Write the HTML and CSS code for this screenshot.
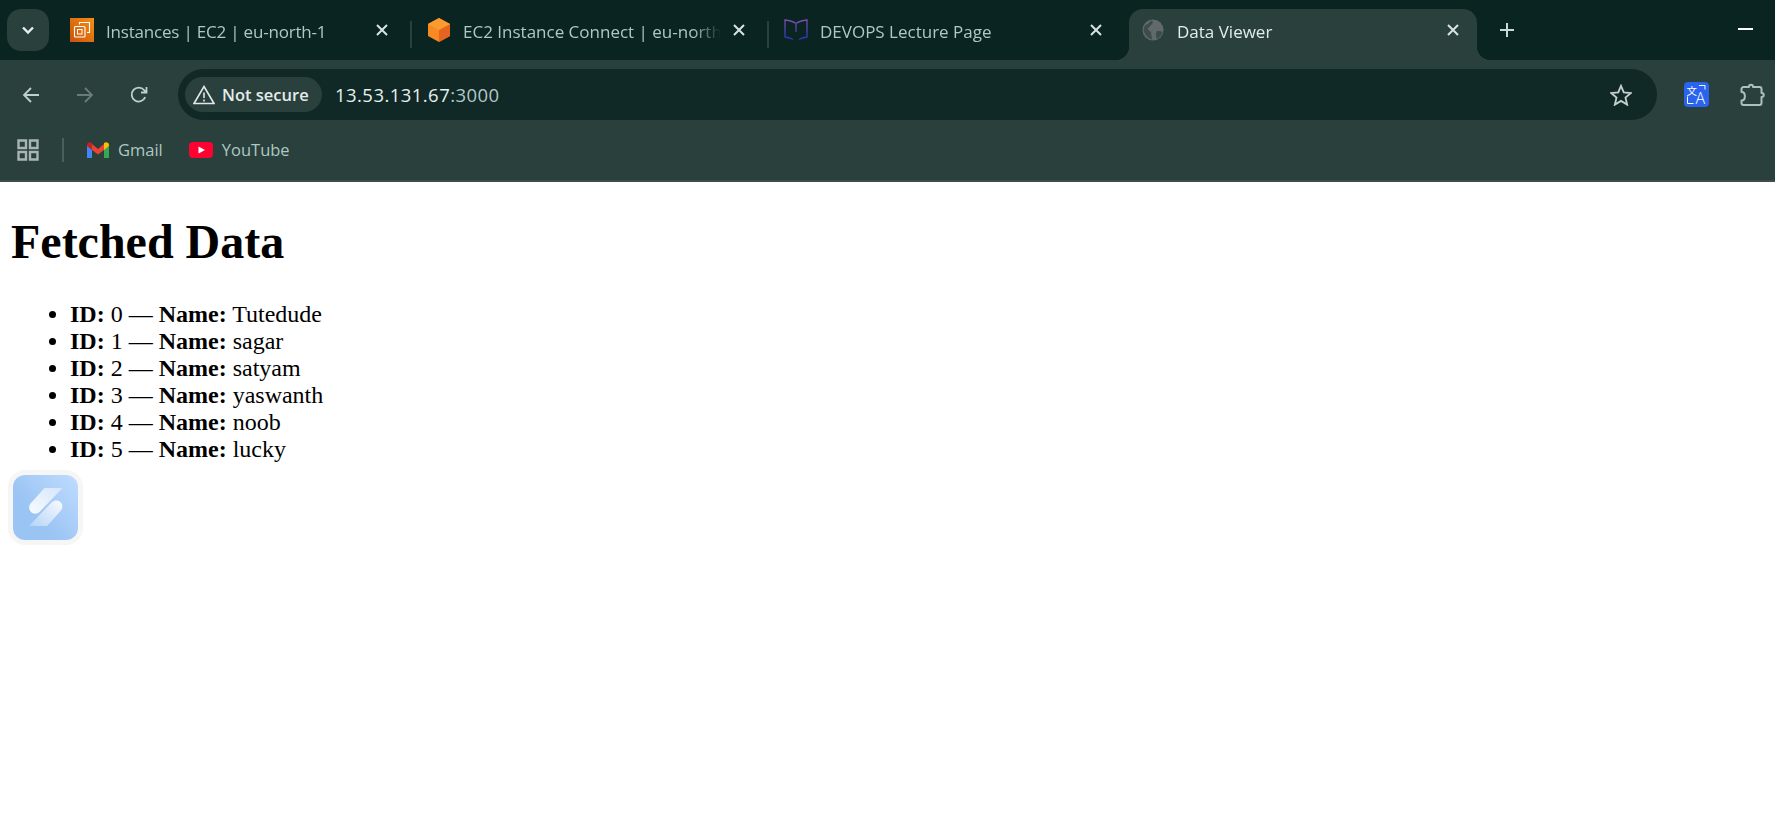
FILE: index.html
```html
<!DOCTYPE html>
<html lang="en">
<head>
<meta charset="utf-8">
<title>Data Viewer</title>
<link rel="stylesheet" href="styles.css">
</head>
<body>
<header class="chrome">
  <div class="tabstrip">
    <button class="tabsearch" aria-label="Search tabs">
      <svg width="14" height="10" viewBox="0 0 14 10"><path d="M2 2.500 7 7.500 12 2.500" fill="none" stroke="#e6efed" stroke-width="2.400"/></svg>
    </button>
    <div class="tabs">
      <div class="tab">
        <svg class="favicon" viewBox="0 0 24 24">
          <defs><linearGradient id="ec2" x1="0" y1="1" x2="1" y2="0"><stop offset="0" stop-color="#c8510b"/><stop offset="1" stop-color="#f59014"/></linearGradient></defs>
          <rect width="24" height="24" fill="url(#ec2)"/>
          <path d="M9.500 6.500V4.500H19.500V14.500H17" fill="none" stroke="#fff" stroke-width="1.100"/>
          <rect x="4.500" y="8.500" width="10.500" height="10.500" rx="1" fill="none" stroke="#fff" stroke-width="1.100"/>
          <rect x="7.500" y="11.500" width="4.500" height="4.500" fill="none" stroke="#fff" stroke-width="1"/>
        </svg>
        <span class="title tight">Instances | EC2 | eu-north-1</span>
        <svg class="close" viewBox="0 0 12 12"><path d="M1 1 11 11M11 1 1 11"/></svg>
      </div>
      <i class="sep"></i>
      <div class="tab">
        <svg class="favicon" viewBox="0 0 24 24">
          <path d="M12 0 23 6V18L12 24 1 18V6Z" fill="#f78a22"/>
          <path d="M12 12 23 6V18L12 24Z" fill="#e5641f"/>
          <path d="M12 0 23 6 12 12 1 6Z" fill="#fb9a2e"/>
        </svg>
        <span class="title">EC2 Instance Connect | eu-north-1</span>
        <svg class="close" viewBox="0 0 12 12"><path d="M1 1 11 11M11 1 1 11"/></svg>
      </div>
      <i class="sep"></i>
      <div class="tab">
        <svg class="favicon" viewBox="0 0 24 24">
          <defs><linearGradient id="book" x1="0" y1="0" x2="0" y2="1"><stop offset="0" stop-color="#7a4fb0"/><stop offset="1" stop-color="#2b35b8"/></linearGradient></defs>
          <path d="M12 5.500C9 3.500 5 2.500 1 2V19C4 19.500 6.500 20 9 21.500M12 5.500C15 3.500 19 2.500 23 2V19C20 19.500 17.500 20 15 21.500M12 6V14" fill="none" stroke="url(#book)" stroke-width="1.300"/>
        </svg>
        <span class="title">DEVOPS Lecture Page</span>
        <svg class="close" viewBox="0 0 12 12"><path d="M1 1 11 11M11 1 1 11"/></svg>
      </div>
      <i class="gap"></i>
      <div class="tab active">
        <svg class="favicon" viewBox="0 0 24 24">
          <circle cx="12" cy="12" r="10.500" fill="#62696c"/>
          <path d="M4 7.500C6.500 6.500 8 4.500 10.500 2.500 12.500 3.500 12 5.500 10.500 6.500 9 8 8.500 9.500 7 10 6.500 12.500 9 12.500 10 14 10.500 16.500 10 18.500 11.500 21.500 8 21 5 18.500 3 14 2.500 11.500 3 9.500 4 7.500ZM15.500 13.500C17 12.800 19.500 13 21.500 14 20.500 17.500 18.500 19.500 16 21 14.800 18.500 14.500 16 15.500 13.500Z" fill="#3a4c4b"/>
        </svg>
        <span class="title">Data Viewer</span>
        <svg class="close" viewBox="0 0 12 12"><path d="M1 1 11 11M11 1 1 11"/></svg>
      </div>
    </div>
    <svg class="newtab" viewBox="0 0 16 16"><path d="M8 1V15M1 8H15"/></svg>
    <i class="minimize"></i>
  </div>

  <div class="navrow">
    <div class="navbtns">
      <svg class="nav" viewBox="0 0 18 18"><path d="M17 9H2M9 2 2 9 9 16"/></svg>
      <svg class="nav dim" viewBox="0 0 18 18"><path d="M1 9H16M9 2 16 9 9 16"/></svg>
      <svg class="nav" viewBox="0 0 18 18"><path d="M15.200 11.200A7 7 0 1 1 14.200 4.200L16.500 6.500M16.500 1V6.500H11"/></svg>
    </div>
    <div class="omnibox">
      <div class="chip">
        <svg class="warn" viewBox="0 0 22 20"><path d="M11 1.500 21 18.500H1ZM11 7.500V13M11 14.500V16.500" fill="none" stroke="#dfe8e6" stroke-width="1.600"/></svg>
        <b>Not secure</b>
      </div>
      <div class="url"><span class="host">13.53.131.67</span>:3000</div>
      <svg class="star" viewBox="0 0 24 24"><path d="M12 2 15 9.200 22.800 9.800 16.900 14.900 18.700 22.500 12 18.400 5.300 22.500 7.100 14.900 1.200 9.800 9 9.200Z"/></svg>
    </div>
    <svg class="translate" viewBox="0 0 25 25">
      <rect width="25" height="25" rx="4" fill="#2a63ee"/>
      <text x="2.500" y="12.500" class="tr-zh">文</text>
      <text x="11.500" y="22" class="tr-a">A</text>
      <path d="M15 3.500H21V7.500M9.500 21.500H3.500V14.500" fill="none" stroke="#fff" stroke-width="1"/>
    </svg>
    <svg class="puzzle" viewBox="0 0 25 25"><path d="M3.500 5H9C9 2 13 2 13 5H19.500A2 2 0 0 1 21.500 7V11C24.500 11 24.500 15 21.500 15V21A2 2 0 0 1 19.500 23H3.500A2 2 0 0 1 1.500 21V18.500C6 18.500 6 10 1.500 10V7A2 2 0 0 1 3.500 5Z"/></svg>
  </div>

  <div class="bookmarks">
    <svg class="apps" viewBox="0 0 22 22"><path d="M1.500 1.500H9V9H1.500ZM13 1.500H20.500V9H13ZM1.500 13H9V20.500H1.500ZM13 13H20.500V20.500H13Z"/></svg>
    <i class="bsep"></i>
    <div class="bm gmail">
      <svg class="gm" viewBox="0 0 22 16">
        <path d="M0 3V16H5V7Z" fill="#4285f4"/>
        <path d="M22 3V16H17V7Z" fill="#34a853"/>
        <path d="M5 2 11 7 17 2V8L11 12.500 5 8Z" fill="#ea4335"/>
        <path d="M0 3C0 0.500 3 -0.500 5 1V8L0 4Z" fill="#c5221f"/>
        <path d="M22 3C22 0.500 19 -0.500 17 1V8L22 4Z" fill="#fbbc04"/>
      </svg>
      <span class="bm-label">Gmail</span>
    </div>
    <div class="bm">
      <svg class="yt" viewBox="0 0 24 16"><rect width="24" height="16" rx="4" fill="#ff0033"/><path d="M9.500 4.500 16 8 9.500 11.500Z" fill="#fff"/></svg>
      <span class="bm-label">YouTube</span>
    </div>
  </div>
</header>

<main class="page">
  <h1>Fetched Data</h1>
  <ul>
    <li><b>ID:</b> 0 — <b>Name:</b> Tutedude</li>
    <li><b>ID:</b> 1 — <b>Name:</b> sagar</li>
    <li><b>ID:</b> 2 — <b>Name:</b> satyam</li>
    <li><b>ID:</b> 3 — <b>Name:</b> yaswanth</li>
    <li><b>ID:</b> 4 — <b>Name:</b> noob</li>
    <li><b>ID:</b> 5 — <b>Name:</b> lucky</li>
  </ul>
  <div class="floater">
    <svg viewBox="0 0 65 65">
      <defs>
        <linearGradient id="lg-bg" x1="1" y1="0" x2="0.300" y2="0.600"><stop offset="0" stop-color="#c0dcff"/><stop offset="1" stop-color="#9ac4f3"/></linearGradient>
        <linearGradient id="lg-top" x1="1" y1="0" x2="0" y2="1"><stop offset="0" stop-color="#d5e6fb"/><stop offset="1" stop-color="#f8fbff"/></linearGradient>
        <linearGradient id="lg-bot" x1="1" y1="0" x2="0" y2="1"><stop offset="0" stop-color="#f8fbff"/><stop offset="1" stop-color="#b5d3f6"/></linearGradient>
      </defs>
      <rect width="65" height="65" fill="url(#lg-bg)"/>
      <path d="M31.500 13H49.500L27 36.500C24 39.500 20 39 18 37 15.500 34.500 15.500 30.500 18 28Z" fill="url(#lg-top)"/>
      <path d="M34 51H16L38.500 27.500C41.500 24.500 45.500 25 47.500 27 50 29.500 50 33.500 47.500 36Z" fill="url(#lg-bot)"/>
    </svg>
  </div>
</main>
</body>
</html>
```

FILE: styles.css
```css
* { box-sizing: border-box; }
html, body { margin: 0; height: 100%; overflow: hidden; background: #fff; }
body { display: flex; flex-direction: column; }

.chrome {
  background: #29403d;
  border-bottom: 2px solid #3f4c4a;
  font-family: "Open Sans", "Noto Sans", sans-serif;
  color: #aec8c3;
}

/* tab strip */
.tabstrip {
  height: 60px;
  background: #0a2422;
  display: flex;
  align-items: flex-start;
  padding-left: 7px;
}
.tabsearch {
  width: 42px;
  height: 42px;
  margin-top: 9px;
  border: 0;
  padding: 0;
  border-radius: 14px;
  background: #29403d;
  display: flex;
  align-items: center;
  justify-content: center;
}
.tabs {
  display: flex;
  margin-left: 9px;
  margin-top: 9px;
  height: 51px;
}
.tab {
  position: relative;
  width: 348px;
  height: 51px;
  display: flex;
  align-items: flex-start;
  padding-left: 12px;
  padding-top: 9px;
  font-size: 17px;
}
.tab.active {
  background: #29403d;
  border-radius: 14px 14px 0 0;
  color: #e2ecea;
}
.tab.active::before,
.tab.active::after {
  content: "";
  position: absolute;
  bottom: 0;
  width: 14px;
  height: 14px;
}
.tab.active::before {
  left: -14px;
  background: radial-gradient(circle at 0 0, transparent 14px, #29403d 14.5px);
}
.tab.active::after {
  right: -14px;
  background: radial-gradient(circle at 100% 0, transparent 14px, #29403d 14.5px);
}
.favicon { width: 24px; height: 24px; flex: none; }
.title {
  flex: 1;
  min-width: 0;
  margin: 1px 12px 0;
  height: 25px;
  line-height: 25px;
  white-space: nowrap;
  overflow: hidden;
  -webkit-mask-image: linear-gradient(to left, transparent, #000 28px);
  mask-image: linear-gradient(to left, transparent, #000 28px);
}
.title.tight { letter-spacing: -0.2px; }
.close {
  width: 12px;
  height: 12px;
  flex: none;
  margin: 6px 18px 0 0;
  fill: none;
  stroke: #d8e4e1;
  stroke-width: 2;
}
.sep {
  width: 2px;
  height: 27px;
  margin: 12px 3.5px 0;
  background: #2a403d;
  flex: none;
}
.gap { width: 9px; flex: none; }
.newtab {
  width: 16px;
  height: 16px;
  margin: 22px 0 0 22px;
  fill: none;
  stroke: #c7dad6;
  stroke-width: 2;
  flex: none;
}
.minimize {
  width: 15px;
  height: 2px;
  margin: 28px 22px 0 auto;
  background: #fff;
}

/* navigation row */
.navrow {
  height: 69px;
  display: flex;
  align-items: center;
  padding: 0 10px 0 22px;
}
.navbtns { display: flex; gap: 36px; }
.nav {
  width: 18px;
  height: 18px;
  fill: none;
  stroke: #bcd0cc;
  stroke-width: 1.800;
}
.nav.dim { stroke: #687c79; }
.omnibox {
  flex: 1;
  height: 51px;
  margin: 0 27px 0 30px;
  padding: 0 25px 0 7px;
  background: #102826;
  border-radius: 26px;
  display: flex;
  align-items: center;
}
.chip {
  width: 137px;
  height: 35px;
  background: #29403d;
  border-radius: 18px;
  display: flex;
  align-items: center;
  padding-left: 8px;
  gap: 7px;
  font-size: 16.500px;
  color: #e3ecea;
  white-space: nowrap;
}
.chip b { font-weight: 600; }
.warn { width: 22px; height: 20px; flex: none; }
.url {
  margin-left: 13px;
  font-size: 18.500px;
  letter-spacing: 0.45px;
  color: #b6c8c5;
  white-space: nowrap;
}
.host { color: #e6f0ee; }
.star {
  width: 22px;
  height: 22px;
  margin-left: auto;
  fill: none;
  stroke: #c3d0cd;
  stroke-width: 2;
}
.translate { width: 25px; height: 25px; flex: none; }
.tr-zh {
  font-family: "Noto Sans CJK SC", sans-serif;
  font-size: 10.500px;
  fill: #fff;
}
.tr-a {
  font-family: "Open Sans", sans-serif;
  font-size: 16px;
  font-weight: 300;
  fill: #fff;
}
.puzzle {
  width: 25px;
  height: 25px;
  flex: none;
  margin-left: 31px;
  fill: none;
  stroke: #a9c2bd;
  stroke-width: 2;
  stroke-linejoin: round;
}

/* bookmarks */
.bookmarks {
  height: 51px;
  padding: 0 0 9px 17px;
  display: flex;
  align-items: center;
  font-size: 16.500px;
}
.apps {
  width: 22px;
  height: 22px;
  fill: none;
  stroke: #a8b5b2;
  stroke-width: 2.400;
}
.bsep {
  width: 2px;
  height: 24px;
  margin: 0 23px;
  background: #46605c;
}
.bm {
  display: flex;
  align-items: center;
  gap: 9px;
  white-space: nowrap;
}
.bm-label { margin-bottom: 2px; }
.gmail { margin-right: 26px; }
.gm { width: 22px; height: 16px; }
.yt { width: 24px; height: 16px; }

/* page */
.page {
  position: relative;
  flex: 1;
  margin: 0;
  padding: 32px 11px 0;
  font-family: "Liberation Serif", "Times New Roman", serif;
  color: #000;
  font-size: 24px;
  line-height: 27px;
}
h1 {
  margin: 0 0 32px;
  font-size: 48px;
  line-height: 55px;
  font-weight: 700;
}
ul { margin: 0; padding-left: 59px; }
.floater {
  position: absolute;
  left: 8px;
  top: 288px;
  width: 75px;
  height: 75px;
  border: 5px solid #f6f6f7;
  border-radius: 17px;
  overflow: hidden;
  background: #fff;
}
.floater svg { display: block; width: 65px; height: 65px; }
```
